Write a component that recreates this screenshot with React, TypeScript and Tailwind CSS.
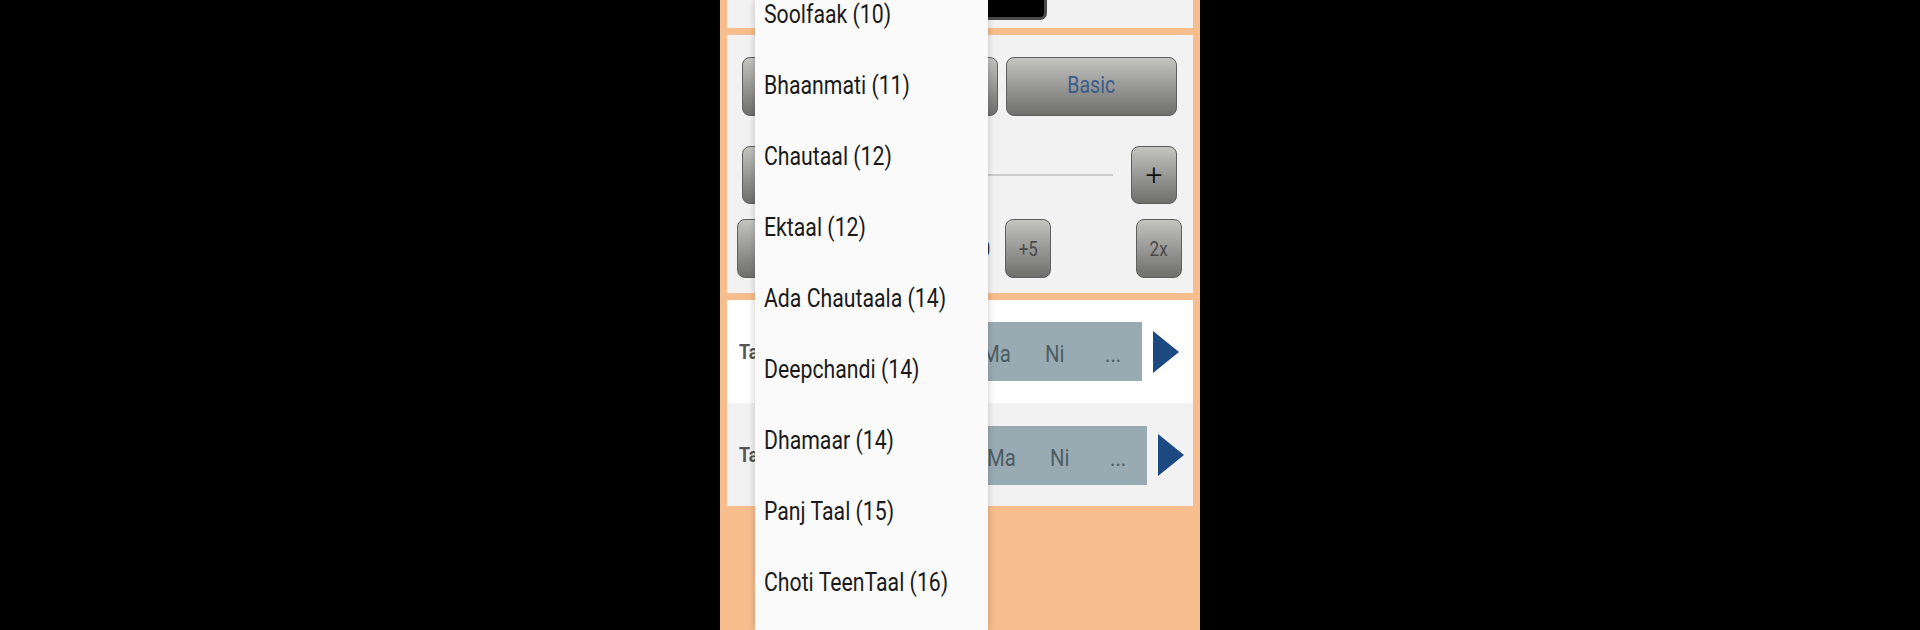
import type { ReactNode } from 'react';

const talas = [
  'Soolfaak (10)',
  'Bhaanmati (11)',
  'Chautaal (12)',
  'Ektaal (12)',
  'Ada Chautaala (14)',
  'Deepchandi (14)',
  'Dhamaar (14)',
  'Panj Taal (15)',
  'Choti TeenTaal (16)',
];

const font = { fontFamily: 'Roboto, "Liberation Sans", sans-serif' };

function GrayButton({ className, children }: { className: string; children?: ReactNode }) {
  return (
    <div
      className={`flex items-center justify-center rounded-[8px] border-[1.5px] border-[#5e5e5e] bg-gradient-to-b from-[#c4c4c1] to-[#6f6f6e] ${className}`}
    >
      {children}
    </div>
  );
}

function Squeeze({ children, className }: { children: ReactNode; className: string }) {
  return <span className={`inline-block origin-center scale-x-[0.85] ${className}`}>{children}</span>;
}

const swaras = [
  { s: 'Ga', w: 'w-[63px]' },
  { s: 'Ma', w: 'w-[63px]' },
  { s: 'Ni', w: 'w-[60px]' },
  { s: '...', w: 'w-[37px]' },
];

function SwaraRow({ bg, boxTop, boxEnd, triTop }: { bg: string; boxTop: string; boxEnd: string; triTop: string }) {
  return (
    <div className={`flex h-[103px] ${bg}`}>
      <div className="flex w-[60px] items-center pl-[12px] pt-[2px]">
        <Squeeze className="origin-left text-[21px] font-bold text-[#555]">Ta</Squeeze>
      </div>
      <div className={`flex ${boxTop} h-[59px] ${boxEnd} items-center justify-end bg-[#99abb2] pt-[4px]`}>
        {swaras.map(({ s, w }) => (
          <div key={s} className={`flex ${w} justify-start`}>
            <Squeeze className="origin-left text-[24px] text-[#4d5c63]">{s}</Squeeze>
          </div>
        ))}
      </div>
      <div className={`ml-[11px] ${triTop}`}>
        <svg width="26" height="42" viewBox="0 0 26 42">
          <path d="M0 0 L26 21 L0 42 Z" fill="#1c4a80" />
        </svg>
      </div>
    </div>
  );
}

export default function App() {
  return (
    <div className="flex h-[630px] w-full justify-center overflow-hidden bg-black" style={font}>
      <div className="relative h-[630px] w-[480px] overflow-hidden bg-[#f7bd8c] px-[7px]">
        {/* top panel, scrolled off */}
        <div className="relative h-[28px] bg-[#f2f2f2]">
          <div className="absolute right-[146px] top-[-10px] h-[30px] w-[100px] rounded-b-[7px] border-[3px] border-[#4a4a4a] bg-black" />
        </div>

        {/* controls panel */}
        <div className="mt-[7px] h-[258px] bg-[#f2f2f2] pl-[15px] pr-[16px] pt-[22px]">
          <div className="flex gap-[8px]">
            <GrayButton className="h-[59px] w-[256px]" />
            <GrayButton className="h-[59px] flex-1">
              <Squeeze className="text-[23px] text-[#3c5d8a]">Basic</Squeeze>
            </GrayButton>
          </div>
          <div className="mt-[30px] flex h-[58px] items-center">
            <GrayButton className="h-[58px] w-[46px]" />
            <div className="mx-[18px] h-[2px] flex-1 bg-[#cbcbcb]" />
            <GrayButton className="h-[58px] w-[46px]">
              <span className="text-[30px] font-light leading-none text-[#111]">+</span>
            </GrayButton>
          </div>
          <div className="-ml-[5px] -mr-[5px] mt-[15px] flex h-[59px] items-center">
            <GrayButton className="h-[59px] w-[46px]" />
            <div className="flex-1 pr-[12px] text-right">
              <Squeeze className="text-[24px] font-bold text-[#333]">120</Squeeze>
            </div>
            <GrayButton className="h-[59px] w-[46px]">
              <Squeeze className="text-[20px] text-[#4a4a4a]">+5</Squeeze>
            </GrayButton>
            <div className="w-[85px]" />
            <GrayButton className="h-[59px] w-[46px]">
              <Squeeze className="text-[20px] text-[#4a4a4a]">2x</Squeeze>
            </GrayButton>
          </div>
        </div>

        {/* rows panel */}
        <div className="mt-[7px]">
          <SwaraRow bg="bg-white" boxTop="mt-[22px]" boxEnd="w-[355px]" triTop="mt-[31px]" />
          <SwaraRow bg="bg-[#f2f2f2]" boxTop="mt-[23px]" boxEnd="w-[360px]" triTop="mt-[31px]" />
        </div>

        {/* dropdown list */}
        <div className="absolute left-[35px] top-0 h-[630px] w-[233px] bg-[#fafafa] shadow-[0_0_7px_rgba(0,0,0,0.22)]">
          <div className="-mt-[21px]">
            {talas.map((t) => (
              <div key={t} className="flex h-[71px] items-center pl-[9px]">
                <span className="inline-block origin-left scale-x-[0.85] whitespace-nowrap text-[25px] text-[#1a1a1a]">{t}</span>
              </div>
            ))}
          </div>
        </div>
      </div>
    </div>
  );
}
